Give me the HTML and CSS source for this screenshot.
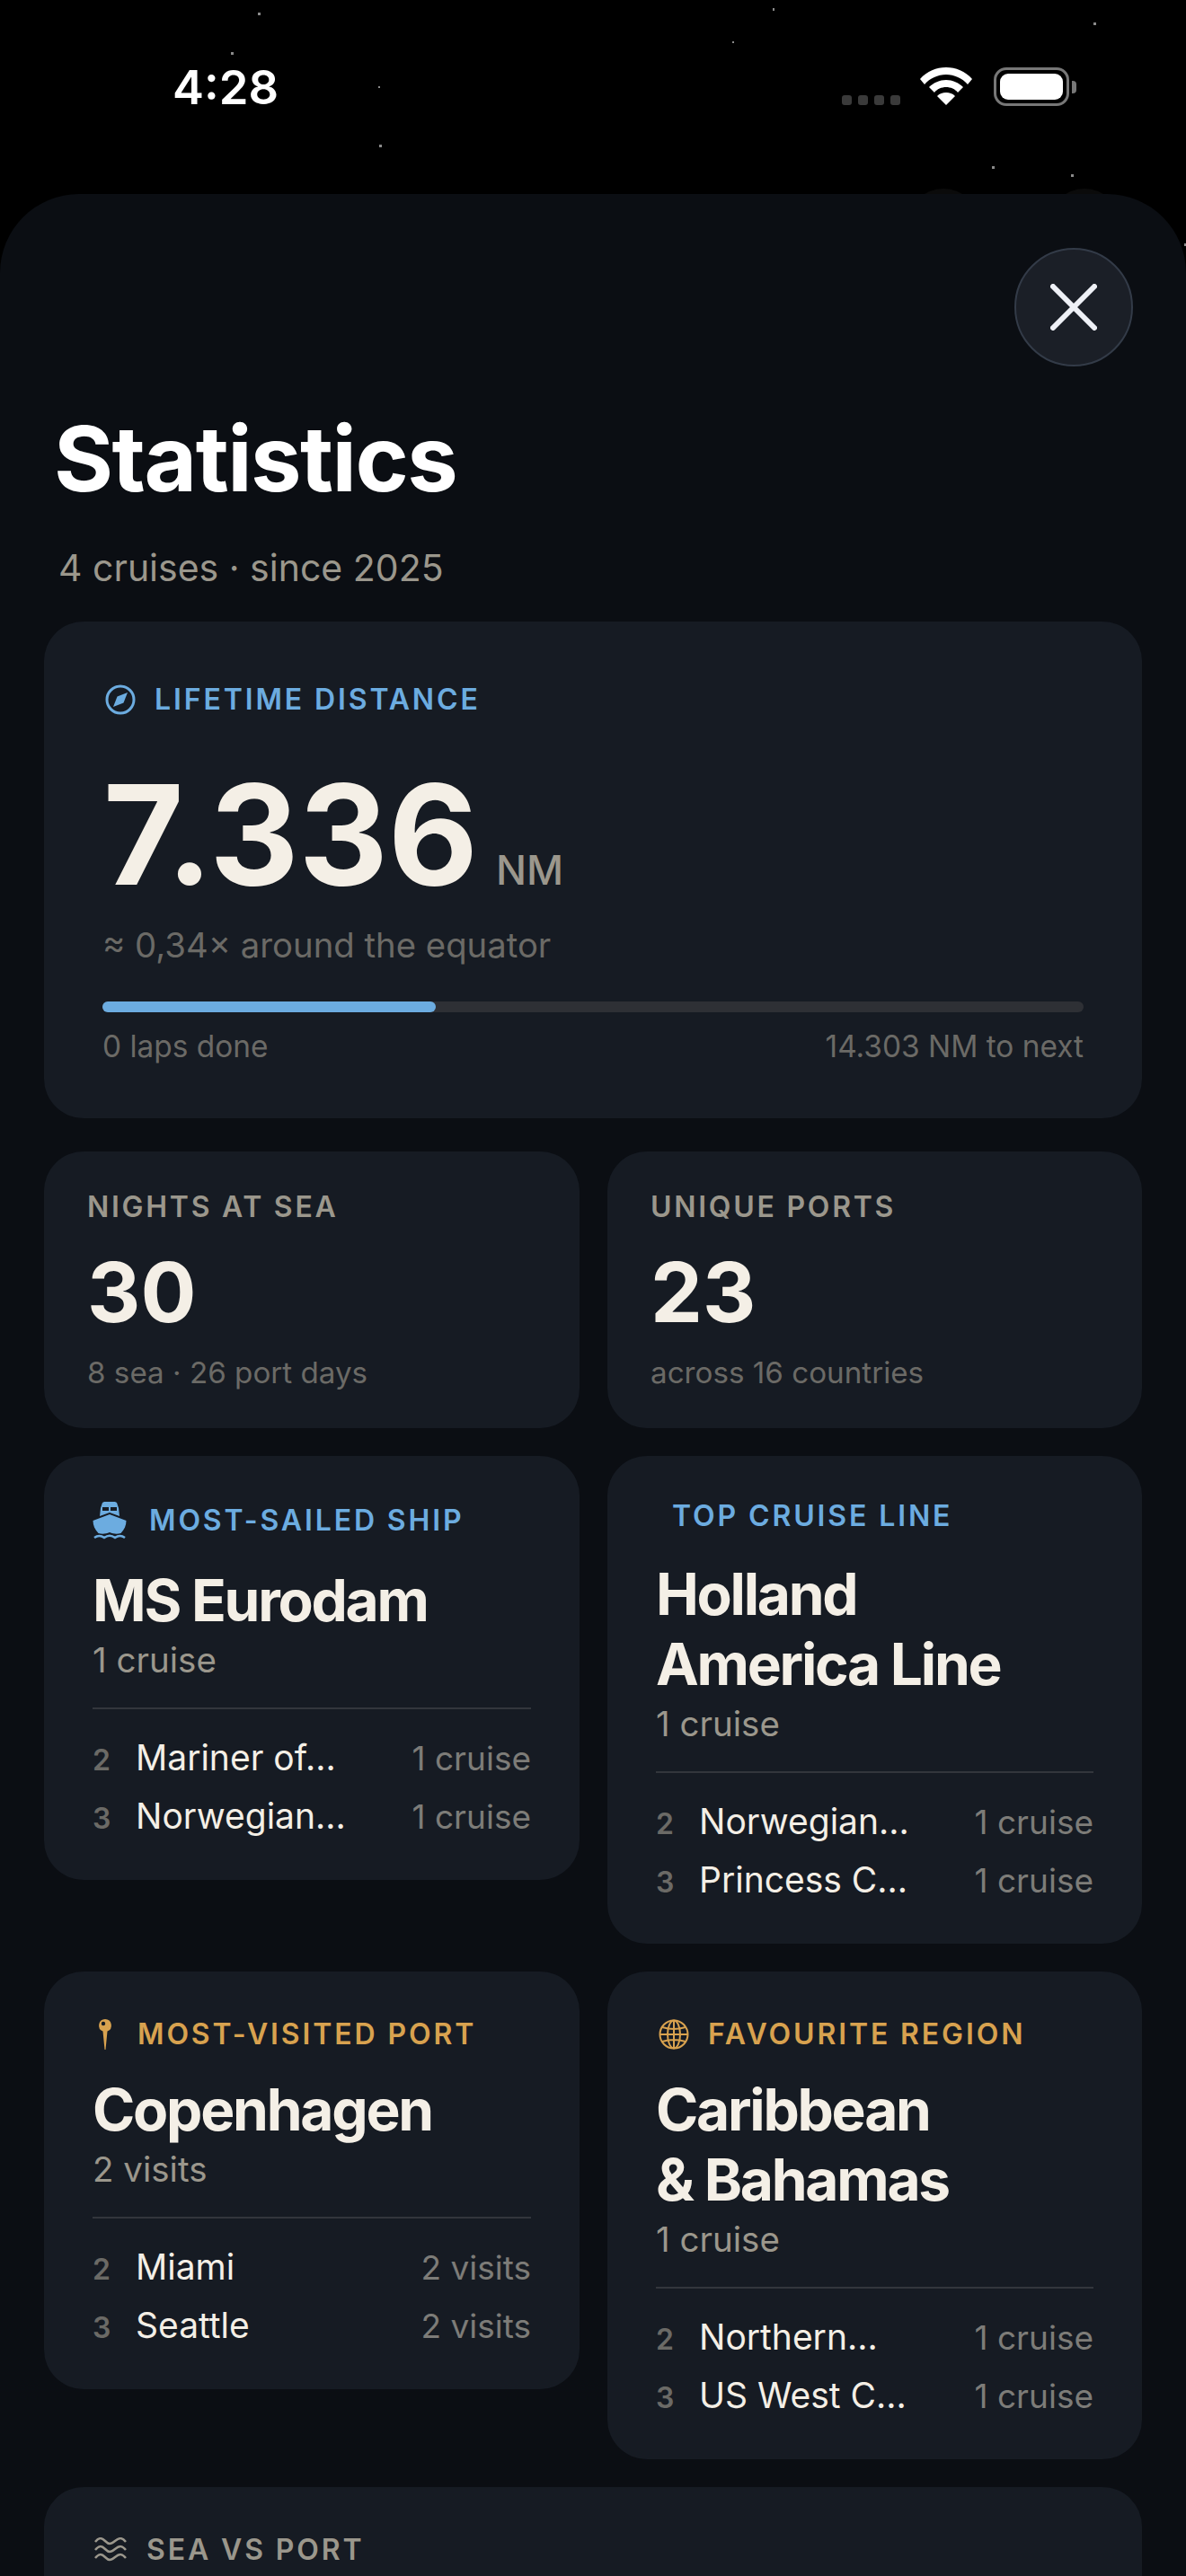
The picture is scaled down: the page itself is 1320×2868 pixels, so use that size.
FILE: index.html
```html
<!DOCTYPE html>
<html lang="en">
<head>
    <meta charset="UTF-8">
    <meta name="viewport" content="width=device-width, initial-scale=1.0">
    <title>Statistics</title>
    <link rel="stylesheet" href="styles.css">
</head>
<body>

<!-- Night sky behind the sheet -->
<svg class="stars" width="1320" height="280" viewBox="0 0 1320 280">
    <g fill="#8a8a8a">
        <rect x="287" y="14" width="3" height="3"/>
        <rect x="860" y="9" width="2" height="3"/>
        <rect x="1217" y="25" width="3" height="3"/>
        <rect x="815" y="46" width="2" height="2"/>
        <rect x="257" y="58" width="3" height="3"/>
        <rect x="421" y="96" width="2" height="2"/>
        <rect x="422" y="161" width="3" height="3"/>
        <rect x="1104" y="185" width="3" height="3"/>
        <rect x="1192" y="194" width="3" height="3"/>
        <rect x="1318" y="271" width="2" height="3"/>
    </g>
    <circle cx="1050" cy="250" r="40" fill="#0b0b0b"/>
    <circle cx="1207" cy="250" r="40" fill="#0b0b0b"/>
</svg>

<div class="status-bar">
    <span class="time">4:28</span>
    <div class="status-icons">
        <div class="signal"><i></i><i></i><i></i><i></i></div>
        <svg class="wifi" width="58" height="42" viewBox="0 0 58 42">
            <path d="M29 0C18 0 8 4 0 13l5 6c6-7 15-11 24-11s18 4 24 11l5-6C50 4 40 0 29 0z" fill="#fff"/>
            <path d="M29 14c-7 0-14 3-19 8l6 6c3-4 8-6 13-6s10 2 13 6l6-6c-5-5-12-8-19-8z" fill="#fff"/>
            <path d="M29 28c-4 0-7 1-10 4l10 10 10-10c-3-3-6-4-10-4z" fill="#fff"/>
        </svg>
        <div class="battery"><div class="battery-level"></div></div>
        <div class="battery-nub"></div>
    </div>
</div>

<div class="sheet">
    <div class="close-row">
        <button class="close-btn">
            <svg width="52" height="52" viewBox="0 0 52 52">
                <path d="M3 3L49 49M49 3L3 49" stroke="#eef0f6" stroke-width="6" stroke-linecap="round" fill="none"/>
            </svg>
        </button>
    </div>

    <h1 class="title">Statistics</h1>
    <p class="subtitle">4 cruises · since 2025</p>

    <!-- Lifetime distance -->
    <div class="card hero">
        <div class="label blue">
            <svg class="icon round-icon" width="34" height="34" viewBox="0 0 34 34">
                <circle cx="17" cy="17" r="15" fill="none" stroke="currentColor" stroke-width="3"/>
                <path d="M25 9L20.500 20.500 9 25 13.500 13.500z" fill="currentColor"/>
            </svg>
            LIFETIME DISTANCE
        </div>
        <div class="distance"><span class="distance-num">7.336</span><span class="distance-unit">NM</span></div>
        <p class="equator">≈ 0,34× around the equator</p>
        <div class="progress"><div class="progress-fill" style="width: 34%"></div></div>
        <div class="progress-text">
            <span>0 laps done</span>
            <span>14.303 NM to next</span>
        </div>
    </div>

    <div class="grid">
        <div class="card small">
            <div class="small-label">NIGHTS AT SEA</div>
            <div class="small-num">30</div>
            <div class="small-note">8 sea · 26 port days</div>
        </div>
        <div class="card small">
            <div class="small-label">UNIQUE PORTS</div>
            <div class="small-num">23</div>
            <div class="small-note">across 16 countries</div>
        </div>

        <!-- Most-sailed ship -->
        <div class="card rank-card">
            <div class="label blue">
                <svg class="icon ship" width="38" height="44" viewBox="0 0 38 44">
                    <path d="M13 1h12l2 1 2 6 1 9-11-4-11 4 1-9 2-6z" fill="currentColor"/>
                    <path d="M11 7h7v4h-7zM20 7h7v4h-7z" fill="#161b23"/>
                    <path d="M19 15L37.500 22c0 5-2 10-6 14-4 1-8 1-12.500-1-4.500 2-8.500 2-12.500 1-4-4-6-9-6-14z" fill="currentColor"/>
                    <path d="M2 41c4-3 7-3 11 0 4-3 8-3 12 0 4-3 7-3 11 0" fill="none" stroke="currentColor" stroke-width="2.500"/>
                </svg>
                MOST-SAILED SHIP
            </div>
            <div class="name">MS Eurodam</div>
            <div class="count">1 cruise</div>
            <div class="runners">
                <div class="runner"><span class="rank">2</span><span class="runner-name">Mariner of...</span><span class="runner-count">1 cruise</span></div>
                <div class="runner"><span class="rank">3</span><span class="runner-name">Norwegian...</span><span class="runner-count">1 cruise</span></div>
            </div>
        </div>

        <!-- Top cruise line -->
        <div class="card rank-card">
            <div class="label blue label-noicon">TOP CRUISE LINE</div>
            <div class="name">Holland<br>America Line</div>
            <div class="count">1 cruise</div>
            <div class="runners">
                <div class="runner"><span class="rank">2</span><span class="runner-name">Norwegian...</span><span class="runner-count">1 cruise</span></div>
                <div class="runner"><span class="rank">3</span><span class="runner-name">Princess C...</span><span class="runner-count">1 cruise</span></div>
            </div>
        </div>

        <!-- Most-visited port -->
        <div class="card rank-card">
            <div class="label gold">
                <svg class="icon pin" width="16" height="36" viewBox="0 0 16 36">
                    <path d="M8 1a7 7 0 0 1 2.500 13.500L8.500 35h-1L5.500 14.500A7 7 0 0 1 8 1z" fill="currentColor"/>
                    <circle cx="6" cy="6" r="2.200" fill="#161b23"/>
                </svg>
                MOST-VISITED PORT
            </div>
            <div class="name">Copenhagen</div>
            <div class="count">2 visits</div>
            <div class="runners">
                <div class="runner"><span class="rank">2</span><span class="runner-name">Miami</span><span class="runner-count">2 visits</span></div>
                <div class="runner"><span class="rank">3</span><span class="runner-name">Seattle</span><span class="runner-count">2 visits</span></div>
            </div>
        </div>

        <!-- Favourite region -->
        <div class="card rank-card">
            <div class="label gold">
                <svg class="icon round-icon" width="34" height="34" viewBox="0 0 34 34">
                    <g fill="none" stroke="currentColor" stroke-width="2">
                        <circle cx="17" cy="17" r="15.500"/>
                        <ellipse cx="17" cy="17" rx="7" ry="15.500"/>
                        <path d="M17 1.500v31M1.500 17h31M4 9c8 2.500 18 2.500 26 0M4 25c8-2.500 18-2.500 26 0"/>
                    </g>
                </svg>
                FAVOURITE REGION
            </div>
            <div class="name">Caribbean<br>&amp; Bahamas</div>
            <div class="count">1 cruise</div>
            <div class="runners">
                <div class="runner"><span class="rank">2</span><span class="runner-name">Northern...</span><span class="runner-count">1 cruise</span></div>
                <div class="runner"><span class="rank">3</span><span class="runner-name">US West C...</span><span class="runner-count">1 cruise</span></div>
            </div>
        </div>

        <!-- Sea vs port, cut off by the bottom of the screen -->
        <div class="card wide">
            <div class="label grey">
                <svg class="icon waves" width="36" height="28" viewBox="0 0 36 28">
                    <path d="M1 5c4-5 7-5 11-1s6 4 11 0 8-4 12 1M1 14c4-5 7-5 11-1s6 4 11 0 8-4 12 1M1 23c4-5 7-5 11-1s6 4 11 0 8-4 12 1" fill="none" stroke="currentColor" stroke-width="2.500"/>
                </svg>
                SEA VS PORT
            </div>
        </div>
    </div>
</div>

</body>
</html>
```

FILE: styles.css
```css
html, body {
    height: 2868px;
    overflow: hidden;
}
body {
    margin: 0;
    padding: 0;
    position: relative;
    background-color: #000;
    font-family: Inter, "Noto Sans", sans-serif;
    color: #f4efe6;
}
.stars {
    position: absolute;
    top: 0;
    left: 0;
}
.status-bar {
    position: relative;
    height: 216px;
    box-sizing: border-box;
    padding: 0 122px 0 192px;
    display: flex;
    justify-content: space-between;
    align-items: flex-start;
}
.time {
    margin-top: 65px;
    font-size: 52.5px;
    line-height: 64px;
    font-weight: 600;
    color: #fff;
}
.status-icons {
    margin-top: 75px;
    display: flex;
    align-items: flex-start;
}
.signal {
    margin-top: 31px;
    margin-right: 22px;
    display: flex;
    gap: 7px;
}
.signal i {
    display: block;
    width: 11px;
    height: 11px;
    border-radius: 3px;
    background-color: #3a3a3a;
}
.wifi {
    margin-right: 24px;
}
.battery {
    width: 84px;
    height: 43px;
    box-sizing: border-box;
    border: 3px solid #777;
    border-radius: 14px;
    padding: 4px;
}
.battery-level {
    height: 100%;
    background-color: #fff;
    border-radius: 9px;
}
.battery-nub {
    width: 5px;
    height: 14px;
    margin: 15px 0 0 3px;
    background-color: #777;
    border-radius: 0 4px 4px 0;
}
.sheet {
    position: relative;
    height: 2652px;
    box-sizing: border-box;
    padding: 60px 49px 0;
    background-color: #0b0e13;
    border-radius: 88px 88px 0 0;
    overflow: hidden;
}
.close-row {
    display: flex;
    justify-content: flex-end;
    margin-right: 10px;
}
.close-btn {
    width: 132px;
    height: 132px;
    padding: 0;
    display: flex;
    align-items: center;
    justify-content: center;
    background-color: #1b1f27;
    border: 2px solid #333b48;
    border-radius: 50%;
}
.title {
    margin: 44px 0 0 11px;
    font-size: 101px;
    line-height: 116px;
    font-weight: 700;
    letter-spacing: -0.015em;
    color: #fff;
}
.subtitle {
    margin: 38px 0 0 16px;
    font-size: 41px;
    line-height: 52px;
    color: #9b978c;
}
.card {
    background-color: #161b23;
    border-radius: 44px;
    box-sizing: border-box;
}
.hero {
    height: 553px;
    margin-top: 34px;
    padding: 67px 65px 0;
}
.label {
    display: flex;
    align-items: center;
    font-size: 32px;
    line-height: 40px;
    font-weight: 600;
    letter-spacing: 0.09em;
}
.blue { color: #6cace0; }
.gold {
    color: #d8a24f;
    margin-bottom: -3px;
}
.grey { color: #9b978c; }
.icon {
    margin-right: 24px;
    flex-shrink: 0;
}
.round-icon {
    margin-left: 3px;
    margin-right: 21px;
}
.waves {
    margin-left: 2px;
    margin-right: 22px;
}
.distance {
    margin-top: 45px;
    margin-left: 1px;
    display: flex;
    align-items: baseline;
}
.distance-num {
    font-size: 154px;
    line-height: 170px;
    font-weight: 700;
}
.distance-unit {
    margin-left: 20px;
    font-size: 45px;
    font-weight: 500;
    color: #9b978c;
}
.equator {
    margin: 14px 0 0;
    font-size: 38.3px;
    line-height: 48px;
    color: #6b6a66;
}
.progress {
    height: 12px;
    margin-top: 39px;
    background-color: #2e3035;
    border-radius: 6px;
}
.progress-fill {
    height: 100%;
    background-color: #6cace0;
    border-radius: 6px;
}
.progress-text {
    display: flex;
    justify-content: space-between;
    margin-top: 18px;
    font-size: 33.4px;
    line-height: 40px;
    color: #6b6a66;
}
.grid {
    display: grid;
    grid-template-columns: 596px 595px;
    gap: 31px;
    margin-top: 37px;
    align-items: start;
}
.small {
    height: 308px;
    padding: 42px 48px 0;
}
.small-label {
    font-size: 32px;
    line-height: 40px;
    font-weight: 600;
    letter-spacing: 0.085em;
    color: #9b978c;
}
.small-num {
    margin-top: 21px;
    font-size: 92px;
    line-height: 108px;
    font-weight: 700;
}
.small-note {
    margin-top: 15px;
    font-size: 33.2px;
    line-height: 40px;
    color: #6b6a66;
}
.rank-card {
    padding: 50px 54px 39px;
}
.label-noicon {
    padding-left: 18px;
    margin-top: -3px;
}
.ship {
    margin-right: 25px;
}
.pin {
    margin-left: 6px;
    margin-right: 28px;
}
.name {
    margin-top: 28px;
    font-size: 64px;
    line-height: 78px;
    font-weight: 700;
    letter-spacing: -0.035em;
}
.count {
    margin-top: 4px;
    font-size: 38.5px;
    line-height: 46px;
    color: #9b978c;
}
.runners {
    margin-top: 30px;
    padding-top: 21px;
    border-top: 2px solid #33363c;
}
.runner {
    display: flex;
    align-items: baseline;
    height: 65px;
    line-height: 65px;
    font-size: 39px;
}
.rank {
    width: 48px;
    font-size: 32px;
    font-weight: 600;
    color: #6b6a66;
}
.runner-name {
    flex: 1;
    color: #f4efe6;
}
.runner-count {
    font-size: 37px;
    color: #7d7c78;
}
.wide {
    grid-column: 1 / 3;
    height: 300px;
    padding: 50px 54px 0;
}
```
